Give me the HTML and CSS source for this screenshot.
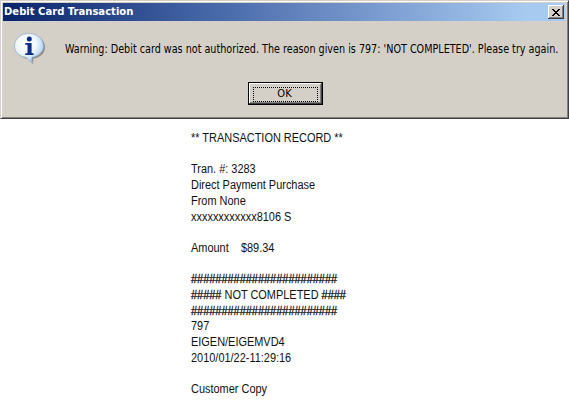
FILE: index.html
```html
<!DOCTYPE html>
<html lang="en">
<head>
<meta charset="utf-8">
<title>Debit Card Transaction</title>
<link rel="stylesheet" href="styles.css">
</head>
<body>
<section class="dialog">
  <header class="titlebar">
    <h1 class="title">Debit Card Transaction</h1>
    <button class="close" aria-label="Close"><svg width="8" height="7" viewBox="0 0 8 7" shape-rendering="crispEdges"><path d="M0 0h2v1h1v1h2V1h1V0h2v1H7v1H6v1H5v1h1v1h1v1h1v1H6V6H5V5H3v1H2v1H0V6h1V5h1V4h1V3H2V2H1V1H0z" fill="#000"/></svg></button>
  </header>
  <div class="message">
    <svg class="info" width="36" height="36" viewBox="0 0 36 36">
      <defs>
        <radialGradient id="bubble" cx=".4" cy=".35" r=".65"><stop offset="0" stop-color="#fff"/><stop offset=".55" stop-color="#eef6fe"/><stop offset="1" stop-color="#a9cdf0"/></radialGradient>
      </defs>
      <path d="M17.500 3C9 3 3 8 3 15c0 6 4 10.500 12 11.800 1.500 1.200 3.500 4.200 5.500 5.200-.7-2-.5-3.500 0-5.200C28 25 32 21 32 15 32 8 26 3 17.500 3z" fill="#77736e" opacity=".75" transform="translate(1 1)"/>
      <path d="M17 2.500C9 2.500 2.500 8 2.500 15c0 6 4.500 10.500 11.500 11.500 2 1.300 4 4.300 6.500 5.500-1-2-.8-3.700-.5-5.700C27 25 31.500 20.800 31.500 15 31.500 8 25.500 2.500 17 2.500z" fill="url(#bubble)" stroke="#8badcd" stroke-width=".7"/>
      <circle cx="17.300" cy="8" r="2.500" fill="#0c2c8c"/>
      <path d="M13.300 12h6.300v10.200h2V24h-8.300v-1.800h2.200v-8.400h-2.200z" fill="#0c2c8c"/>
    </svg>
    <p class="text"><span class="fit">Warning: Debit card was not authorized. The reason given is 797: 'NOT COMPLETED'. Please try again.</span></p>
  </div>
  <div class="actions"><button class="ok"><span class="focus">OK</span></button></div>
</section>
<pre class="receipt">** TRANSACTION RECORD **

Tran. #: 3283
Direct Payment Purchase
From None
xxxxxxxxxxxx8106 S

Amount    $89.34

<span class="rule">########################</span>
<span class="rule">#####</span> NOT COMPLETED <span class="rule">####</span>
<span class="rule">########################</span>
797
EIGEN/EIGEMVD4
2010/01/22-11:29:16

Customer Copy</pre>
</body>
</html>
```
FILE: styles.css
```css
* { box-sizing: border-box; }
body { margin: 0; background: #fff; overflow: hidden; }
button { padding: 0; border: 0; border-radius: 0; color: #000; background: #d4d0c8; font: inherit; }
.dialog {
  width: 569px; height: 119px; padding: 1px;
  background: #d4d0c8;
  border: 1px solid; border-color: #d4d0c8 #404040 #404040 #d4d0c8;
  box-shadow: inset 1px 1px #fff, inset -1px -1px #808080;
  font-family: "DejaVu Sans Condensed", "DejaVu Sans", sans-serif;
  font-stretch: condensed; font-size: 11px;
}
.titlebar {
  display: flex; align-items: center; justify-content: space-between;
  height: 18px; margin: 1px 2px 0 1px; padding: 0 1px 0 1px;
  background: linear-gradient(90deg, #0a246a, #3f60a2 33%, #7495cb 63%, #a6caf0 93%);
}
.title { margin: 0; color: #fff; font-size: 11px; line-height: 18px; white-space: nowrap; transform: scaleX(1.015); transform-origin: left; }
.close {
  display: flex; align-items: center; justify-content: center;
  width: 16px; height: 14px;
  box-shadow: inset -1px -1px #404040, inset 1px 1px #fff, inset -2px -2px #808080;
}
.message { display: flex; align-items: flex-start; height: 61px; padding: 10px 0 0 10px; }
.info { flex: none; }
.text { width: 500px; margin: 10px 0 0 17px; line-height: 16px; white-space: nowrap; }
.fit { display: inline-block; font-size: 11.5px; transform: scaleX(.93); transform-origin: left; }
.actions { display: flex; padding-left: 246px; }
.ok {
  width: 75px; height: 23px; padding: 4px;
  border: 1px solid #000;
  box-shadow: inset -1px -1px #404040, inset 1px 1px #fff, inset -2px -2px #808080;
}
.focus { display: block; height: 15px; padding-right: 2px; border: 1px dotted #000; line-height: 12px; }
.receipt {
  margin: 12px 0 0 191px; width: 200px;
  font: 12px/15.7px "Liberation Sans", Arial, sans-serif;
  color: #111; transform: scaleX(.912); transform-origin: left;
}
.rule { -webkit-text-stroke: .3px #111; }
```
